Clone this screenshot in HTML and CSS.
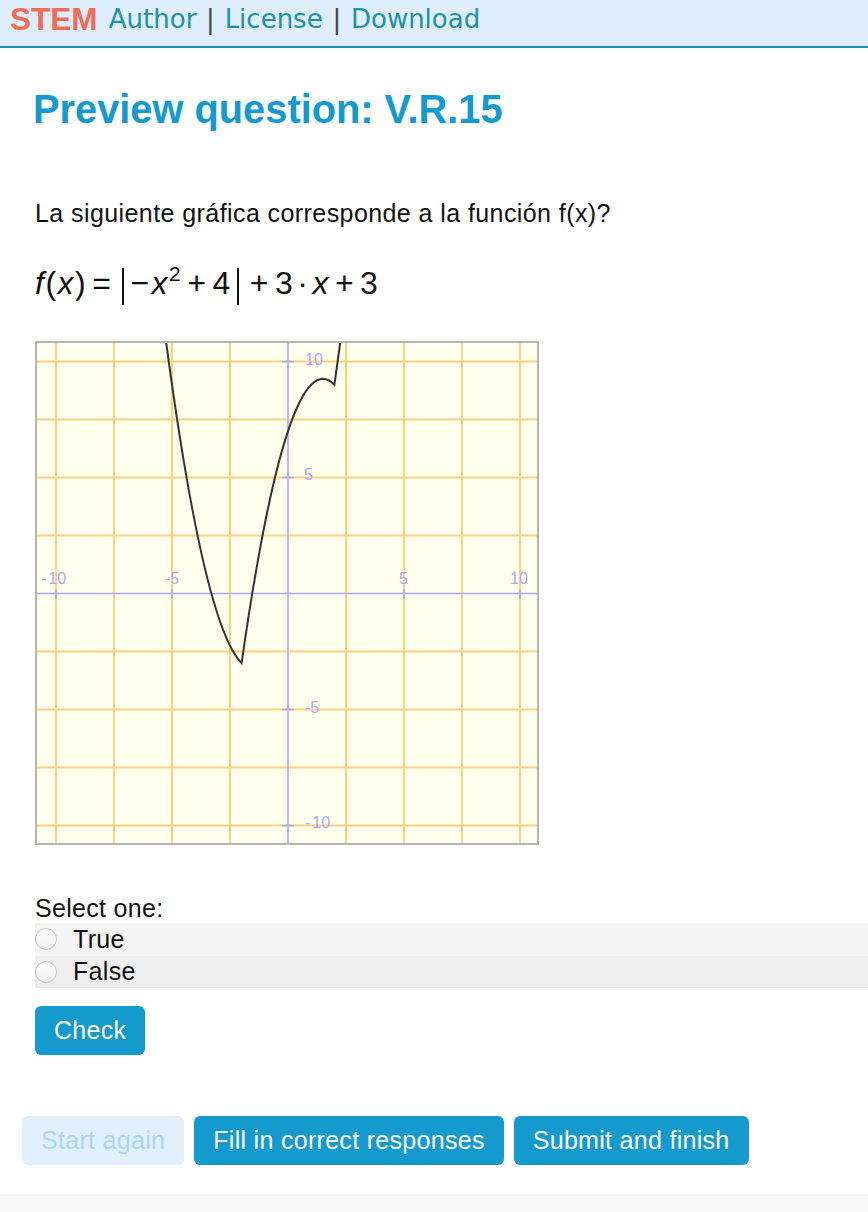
FILE: index.html
```html
<!DOCTYPE html>
<html lang="en">
<head>
<meta charset="UTF-8" />
<meta name="viewport" content="width=device-width, initial-scale=1" />
<title>Preview question: V.R.15</title>
<link rel="stylesheet" href="styles.css">
</head>
<body>

<header class="topbar">
  <span class="brand">STEM</span>
  <a href="#">Author</a> <span class="sep">|</span>
  <a href="#">License</a> <span class="sep">|</span>
  <a href="#">Download</a>
</header>

<main class="page">
  <h1 class="title">Preview question: V.R.15</h1>

  <p class="question">La siguiente gráfica corresponde a la función f(x)?</p>

  <div class="formula">
    <i>f</i><span>(</span><i>x</i><span>)</span><span class="op">=</span><span class="bar"></span><span class="neg">−</span><i>x</i><sup>2</sup><span class="op">+</span><span>4</span><span class="bar"></span><span class="op">+</span><span>3</span><span class="dot">·</span><i>x</i><span class="op">+</span><span>3</span>
  </div>

  <!-- Gráfica: origen en (251, 250.5), 23.2 px por unidad -->
  <svg class="graph" width="500" height="500" viewBox="0 0 500 500">
    <rect width="500" height="500" fill="#ffffee" />
    <g stroke="#ffd07e" stroke-width="2">
      <line x1="19" y1="0" x2="19" y2="500" />
      <line x1="77" y1="0" x2="77" y2="500" />
      <line x1="135" y1="0" x2="135" y2="500" />
      <line x1="193" y1="0" x2="193" y2="500" />
      <line x1="309" y1="0" x2="309" y2="500" />
      <line x1="367" y1="0" x2="367" y2="500" />
      <line x1="425" y1="0" x2="425" y2="500" />
      <line x1="483" y1="0" x2="483" y2="500" />
      <line x1="0" y1="18.5" x2="500" y2="18.5" />
      <line x1="0" y1="76.5" x2="500" y2="76.5" />
      <line x1="0" y1="134.5" x2="500" y2="134.5" />
      <line x1="0" y1="192.5" x2="500" y2="192.5" />
      <line x1="0" y1="308.5" x2="500" y2="308.5" />
      <line x1="0" y1="366.5" x2="500" y2="366.5" />
      <line x1="0" y1="424.5" x2="500" y2="424.5" />
      <line x1="0" y1="482.5" x2="500" y2="482.5" />
    </g>
    <g stroke="#a8a8ff" stroke-width="1.6">
      <line x1="251" y1="0" x2="251" y2="500" />
      <line x1="0" y1="250.5" x2="500" y2="250.5" />
      <line x1="19" y1="246" x2="19" y2="256" />
      <line x1="135" y1="246" x2="135" y2="256" />
      <line x1="367" y1="246" x2="367" y2="256" />
      <line x1="483" y1="246" x2="483" y2="256" />
      <line x1="245" y1="18.5" x2="257" y2="18.5" />
      <line x1="245" y1="134.5" x2="257" y2="134.5" />
      <line x1="245" y1="366.5" x2="257" y2="366.5" />
      <line x1="245" y1="482.5" x2="257" y2="482.5" />
    </g>
    <g class="ticks" fill="#a8a8ff">
      <text x="4" y="241">-<tspan dx="2">10</tspan></text>
      <text x="128" y="241">-5</text>
      <text x="362" y="241">5</text>
      <text x="473" y="241">10</text>
      <text x="268" y="22">10</text>
      <text x="267" y="137">5</text>
      <text x="268" y="370">-5</text>
      <text x="268" y="485">-<tspan dx="2">10</tspan></text>
    </g>
    <path class="curve" d="M128.04 -9.11 Q166.32 281.82 204.6 320.1 Q251 -4.7 297.4 41.7 Q300.88 17.34 304.36 -9.11" />
  </svg>

  <div class="answer">
    <div class="prompt">Select one:</div>
    <label class="option"><input type="radio" name="q1" /> True</label>
    <label class="option alt"><input type="radio" name="q1" /> False</label>
  </div>

  <button class="btn check">Check</button>
</main>

<div class="controls">
  <button class="btn" disabled>Start again</button>
  <button class="btn">Fill in correct responses</button>
  <button class="btn">Submit and finish</button>
</div>

<div class="bottom-band"></div>

</body>
</html>
```

FILE: styles.css
```css
body {
  margin: 0;
  font-family: "Liberation Sans", Arial, sans-serif;
  color: #111;
  background: #fff;
}
.topbar {
  height: 46px;
  background: #deeefd;
  border-bottom: 2px solid #2190a9;
  padding-left: 10px;
  font-family: "DejaVu Sans", Verdana, sans-serif;
  font-size: 26px;
  line-height: 35px;
  color: #444;
  white-space: nowrap;
}
.topbar a {
  color: #2190a9;
  text-decoration: none;
}
.topbar .brand {
  font-family: "Liberation Sans", Arial, sans-serif;
  font-weight: bold;
  font-size: 31.5px;
  color: #f36b57;
  margin-right: 3px;
  position: relative;
  top: 2px;
}
.topbar .sep {
  color: #444;
  margin: 0 1.5px;
}

.page {
  padding-left: 35px;
}
.title {
  margin: 38px 0 0 -2px;
  font-size: 39.8px;
  line-height: 46px;
  font-weight: bold;
  color: #149ad0;
}
.question {
  margin: 67px 0 0 0;
  font-size: 25px;
  line-height: 28px;
  letter-spacing: 0.42px;
}

.formula {
  margin-top: 36px;
  height: 40px;
  font-size: 32px;
  line-height: 40px;
  letter-spacing: 1.5px;
  white-space: nowrap;
}
.formula i {
  font-style: italic;
}
.formula sup {
  font-size: 21px;
  vertical-align: 13px;
  line-height: 0;
}
.formula .op {
  margin: 0 5px;
}
.formula .neg {
  margin: 0 1px 0 0;
}
.formula .dot {
  margin: 0 3px;
}
.formula .bar {
  display: inline-block;
  width: 0;
  height: 37px;
  border-left: 2px solid #111;
  vertical-align: -11px;
  margin: 0 6px 0 5px;
}

.graph {
  display: block;
  margin-top: 38px;
  border: 2px solid #b4b4b4;
  overflow: hidden;
}
.graph .ticks {
  font-family: "Liberation Sans", Arial, sans-serif;
  font-size: 16px;
}
.graph .curve {
  fill: none;
  stroke: #333;
  stroke-width: 2;
}

.answer {
  margin-top: 49px;
  font-size: 25px;
  letter-spacing: 0.3px;
}
.prompt {
  line-height: 28px;
  margin-bottom: 1px;
}
.option {
  display: flex;
  align-items: center;
  height: 32.5px;
  background: #f4f4f4;
}
.option.alt {
  background: #eeeeee;
}
.option input {
  appearance: none;
  -webkit-appearance: none;
  width: 22px;
  height: 22px;
  margin: 0 16px 0 0;
  border-radius: 50%;
  border: 1px solid #c2c2c2;
  background: linear-gradient(#ffffff, #f0f0f0);
}

.btn {
  font-family: "Liberation Sans", Arial, sans-serif;
  font-size: 25px;
  letter-spacing: 0.3px;
  height: 49px;
  padding: 0 19px;
  border: none;
  border-radius: 6px;
  background: #149acd;
  color: #fff;
  cursor: pointer;
}
.btn:disabled {
  background: #e0f0fe;
  color: #abd5f6;
  cursor: default;
}
.check {
  display: block;
  margin-top: 18px;
}

.controls {
  display: flex;
  gap: 10px;
  padding-left: 22px;
  margin-top: 61px;
}

.bottom-band {
  margin-top: 29px;
  height: 30px;
  background: #f8f8f8;
}
```
